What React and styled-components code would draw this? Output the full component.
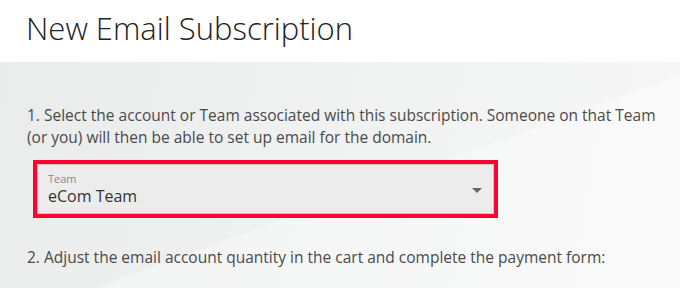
import React from "react";
import styled, { createGlobalStyle } from "styled-components";

const Global = createGlobalStyle`
  html, body { margin: 0; padding: 0; }
  body { font-family: "Open Sans", "Noto Sans", sans-serif; background: #fff; }
`;

const Page = styled.div`
  width: 680px;
  height: 288px;
  display: flex;
  flex-direction: column;
  overflow: hidden;
`;

const Header = styled.header`
  height: 62px;
  background: #fff;
  display: flex;
  align-items: center;
  padding-left: 26px;
  padding-bottom: 6px;
  box-sizing: border-box;
`;

const Title = styled.h1`
  margin: 0;
  font-family: "Open Sans", sans-serif;
  font-weight: 300;
  font-size: 31px;
  color: #222;
`;

const Body = styled.main`
  flex: 1;
  padding: 42px 22px 0 27px;
  background:
    linear-gradient(160deg, rgba(255,255,255,0) 55%, rgba(255,255,255,0.35) 55%),
    linear-gradient(100deg, #eaebeb 0%, #f1f2f2 55%, #f7f7f7 100%);
`;

const Para = styled.p`
  margin: ${(p) => p.$mt || 0}px 0 0;
  font-size: 15.5px;
  line-height: 22px;
  color: #4a4a4a;
`;

const Highlight = styled.div`
  margin: 12px 0 0 6px;
  width: 465px;
  border: 4px solid #ff0033;
  box-sizing: border-box;
`;

const Select = styled.div`
  height: 50px;
  box-sizing: border-box;
  border: 1px solid #c9c9c9;
  background: #ececec;
  display: flex;
  align-items: center;
  justify-content: space-between;
  padding: 0 11px 0 10px;
`;

const Values = styled.div`
  display: flex;
  flex-direction: column;
  gap: 1px;
`;

const Label = styled.span`
  font-size: 11px;
  line-height: 13px;
  color: #888;
`;

const Value = styled.span`
  font-size: 16px;
  line-height: 20px;
  color: #333;
`;

const Arrow = styled.span`
  width: 0;
  height: 0;
  border-left: 5px solid transparent;
  border-right: 5px solid transparent;
  border-top: 5px solid #666;
  margin-top: 2px;
`;

export default function App() {
  return (
    <>
      <Global />
      <Page>
        <Header>
          <Title>New Email Subscription</Title>
        </Header>
        <Body>
          <Para>
            1. Select the account or Team associated with this subscription. Someone on that Team
            (or you) will then be able to set up email for the domain.
          </Para>
          <Highlight>
            <Select>
              <Values>
                <Label>Team</Label>
                <Value>eCom Team</Value>
              </Values>
              <Arrow />
            </Select>
          </Highlight>
          <Para $mt={28}>
            2. Adjust the email account quantity in the cart and complete the payment form:
          </Para>
        </Body>
      </Page>
    </>
  );
}
